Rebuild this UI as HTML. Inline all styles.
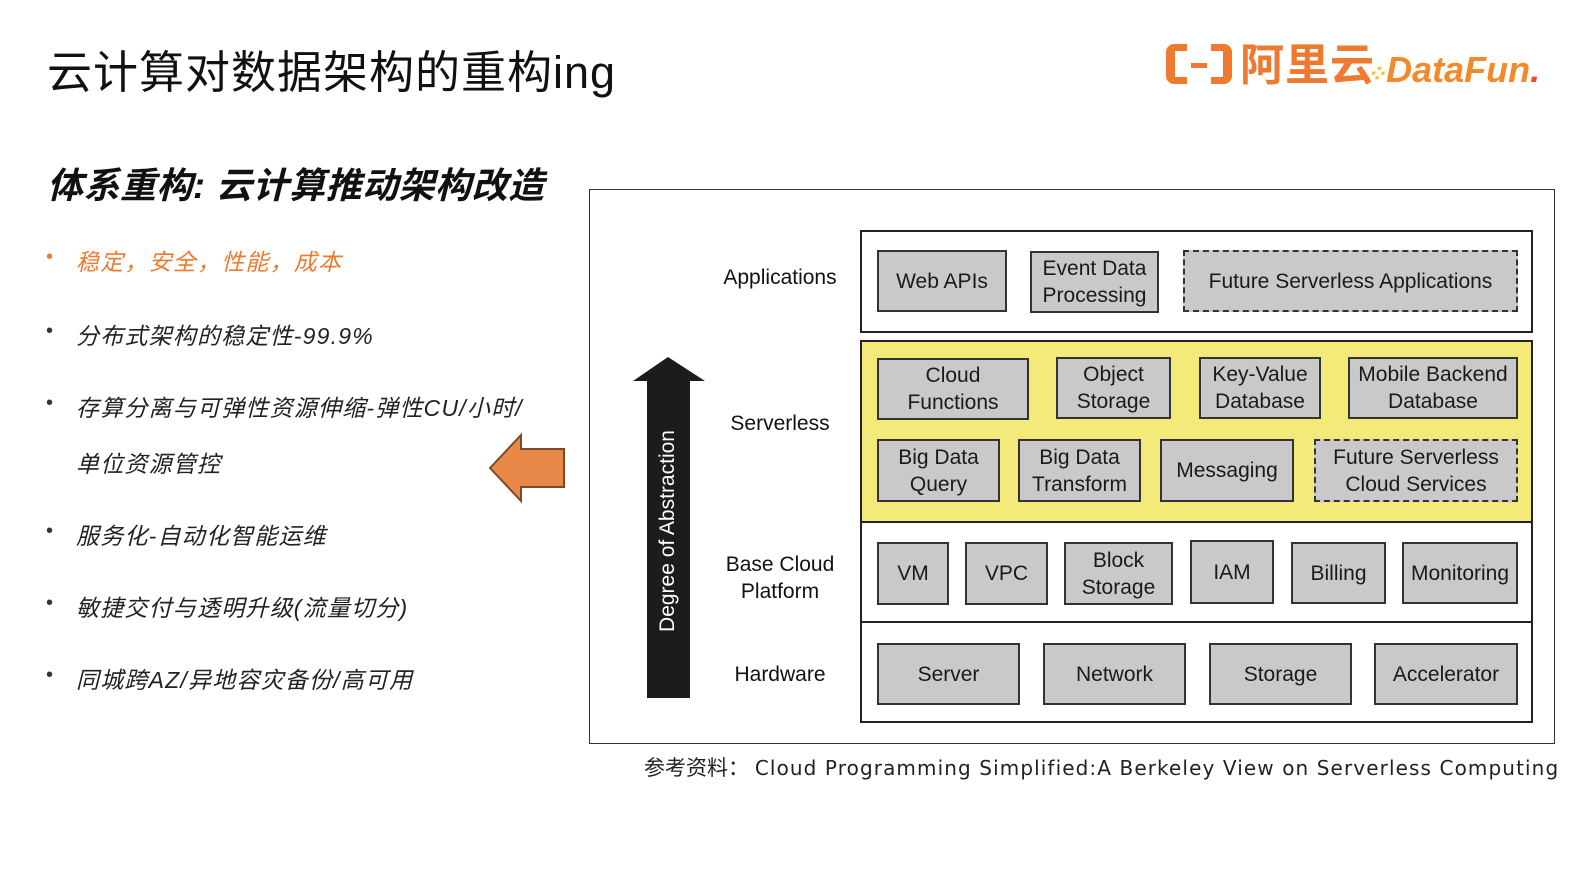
<!DOCTYPE html>
<html><head><meta charset="utf-8"><style>
body{margin:0;width:1572px;height:884px;background:#fff;position:relative;overflow:hidden;font-family:"Liberation Sans","Noto Sans CJK SC",sans-serif}
.a{position:absolute}
.t{color:#111}
.b{position:absolute;background:#c9c9c9;border:2px solid #333;box-sizing:border-box;display:flex;align-items:center;justify-content:center;text-align:center;font-size:21px;line-height:27px;color:#1a1a1a}
.d{border:2px dashed #333}
.L{position:absolute;border:2px solid #222;box-sizing:border-box}
.lab{position:absolute;width:160px;left:698px;text-align:center;font-size:21px;line-height:27px;color:#111}
.bl{position:absolute;left:76px;font-size:23px;letter-spacing:1.2px;font-style:italic;color:#222}
.dot{position:absolute;left:46px;font-size:20px;color:#333}
#dg{position:absolute;left:2px;top:1px;width:1572px;height:884px}
</style></head><body>
<div class="a t" style="left:47px;top:44px;font-size:45px;letter-spacing:1px;line-height:58px">云计算对数据架构的重构ing</div>
<div class="a" style="left:1166px;top:40px;font-size:44px;line-height:52px;color:#ee7a30;font-weight:bold;letter-spacing:1px">
<span style="display:inline-block;width:66px;height:40px;border:7px solid #ee7a30;border-left-width:9px;border-right-width:9px;border-radius:8px;box-sizing:border-box;vertical-align:-4px;position:relative;margin-right:8px"><span style="position:absolute;left:12px;right:12px;top:-8px;height:8px;background:#fff"></span><span style="position:absolute;left:12px;right:12px;bottom:-8px;height:8px;background:#fff"></span><span style="position:absolute;left:16px;right:16px;top:12px;height:5px;background:#ee7a30"></span></span>阿里云</div>
<div class="a" style="left:1366px;top:46px;font-size:36px;font-style:italic;font-weight:bold;line-height:48px;color:#f08a2a;white-space:nowrap"><span style="color:#f5c232;font-size:24px">⁘</span>DataFun<span style="color:#e94e2a">.</span></div>

<div class="a t" style="left:47px;top:164px;font-size:36px;letter-spacing:0.5px;font-weight:bold;font-style:italic;line-height:44px">体系重构: 云计算推动架构改造</div>
<div class="dot" style="top:246px;color:#ee7a30">•</div><div class="bl" style="top:243px;color:#ee7a30">稳定，安全，性能，成本</div>
<div class="dot" style="top:320px">•</div><div class="bl" style="top:317px">分布式架构的稳定性-99.9%</div>
<div class="dot" style="top:392px">•</div><div class="bl" style="top:389px">存算分离与可弹性资源伸缩-弹性CU/小时/</div>
<div class="bl" style="top:445px">单位资源管控</div>
<div class="dot" style="top:520px">•</div><div class="bl" style="top:517px">服务化-自动化智能运维</div>
<div class="dot" style="top:592px">•</div><div class="bl" style="top:589px">敏捷交付与透明升级(流量切分)</div>
<div class="dot" style="top:664px">•</div><div class="bl" style="top:661px">同城跨AZ/异地容灾备份/高可用</div>

<svg class="a" style="left:487px;top:430px" width="82" height="76"><polygon points="3,38 34,5 34,19 77,19 77,57 34,57 34,71" fill="#e8894a" stroke="#7a4a2a" stroke-width="2"/></svg>

<div id="dg">
<div class="L" style="left:587px;top:188px;width:966px;height:555px;border-width:1.5px;border-color:#333"></div>
<svg class="a" style="left:628px;top:354px" width="80" height="346"><polygon points="38,2 75,26 60,26 60,343 17,343 17,26 3,26" fill="#1c1c1c"/></svg>
<div class="a" style="left:666px;top:530px;width:0;height:0"><div style="position:absolute;transform:translate(-50%,-50%) rotate(-90deg);white-space:nowrap;color:#fff;font-size:21px">Degree of Abstraction</div></div>

<div class="lab" style="top:263px">Applications</div>
<div class="lab" style="top:409px">Serverless</div>
<div class="lab" style="top:550px">Base Cloud<br>Platform</div>
<div class="lab" style="top:660px">Hardware</div>

<div class="L" style="left:858px;top:229px;width:673px;height:103px;background:#fff"></div>
<div class="L" style="left:858px;top:339px;width:673px;height:183px;background:#f4ea7a"></div>
<div class="L" style="left:858px;top:520px;width:673px;height:102px"></div>
<div class="L" style="left:858px;top:620px;width:673px;height:102px"></div>

<div class="b" style="left:875px;top:249px;width:130px;height:62px">Web APIs</div>
<div class="b" style="left:1028px;top:250px;width:129px;height:62px">Event Data<br>Processing</div>
<div class="b d" style="left:1181px;top:249px;width:335px;height:62px">Future Serverless Applications</div>

<div class="b" style="left:875px;top:357px;width:152px;height:62px">Cloud<br>Functions</div>
<div class="b" style="left:1054px;top:356px;width:115px;height:62px">Object<br>Storage</div>
<div class="b" style="left:1197px;top:356px;width:122px;height:62px">Key-Value<br>Database</div>
<div class="b" style="left:1346px;top:356px;width:170px;height:62px">Mobile Backend<br>Database</div>
<div class="b" style="left:875px;top:438px;width:123px;height:63px">Big Data<br>Query</div>
<div class="b" style="left:1016px;top:438px;width:123px;height:63px">Big Data<br>Transform</div>
<div class="b" style="left:1158px;top:438px;width:134px;height:63px">Messaging</div>
<div class="b d" style="left:1312px;top:438px;width:204px;height:63px">Future Serverless<br>Cloud Services</div>

<div class="b" style="left:875px;top:541px;width:72px;height:63px">VM</div>
<div class="b" style="left:963px;top:541px;width:83px;height:63px">VPC</div>
<div class="b" style="left:1062px;top:541px;width:109px;height:63px">Block<br>Storage</div>
<div class="b" style="left:1188px;top:539px;width:84px;height:64px">IAM</div>
<div class="b" style="left:1289px;top:541px;width:95px;height:62px">Billing</div>
<div class="b" style="left:1400px;top:541px;width:116px;height:62px">Monitoring</div>

<div class="b" style="left:875px;top:642px;width:143px;height:62px">Server</div>
<div class="b" style="left:1041px;top:642px;width:143px;height:62px">Network</div>
<div class="b" style="left:1207px;top:642px;width:143px;height:62px">Storage</div>
<div class="b" style="left:1372px;top:642px;width:144px;height:62px">Accelerator</div>
</div>

<div class="a" style="left:644px;top:752px;font-size:21px;color:#222;white-space:nowrap">参考资料：&nbsp;<span style="font-family:'DejaVu Sans',sans-serif;font-size:20px;letter-spacing:1.1px">Cloud Programming Simplified:A Berkeley View on Serverless Computing</span></div>
</body></html>
